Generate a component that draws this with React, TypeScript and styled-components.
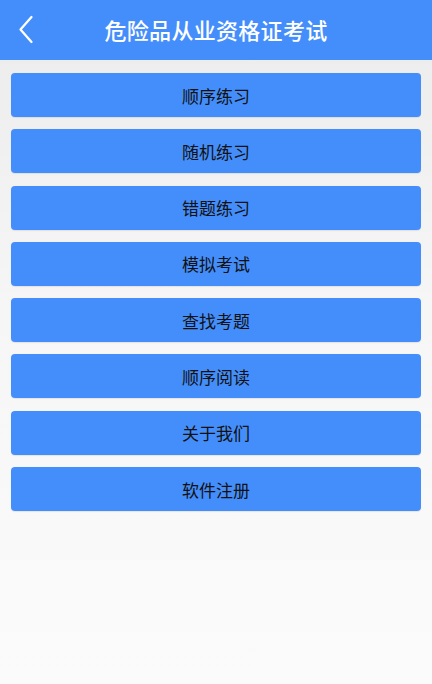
import React from "react";
import styled, { createGlobalStyle } from "styled-components";

const Global = createGlobalStyle`
  html, body { margin: 0; padding: 0; }
  body {
    font-family: "Noto Sans CJK SC", "Noto Sans", sans-serif;
    background: #fafafa;
  }
`;

const Page = styled.div`
  width: 432px;
  height: 684px;
  display: flex;
  flex-direction: column;
  background: linear-gradient(to bottom, #ebebeb 0%, #f6f6f6 45%, #fbfbfb 100%);
  overflow: hidden;
`;

const Header = styled.header`
  height: 60px;
  background: #448efc;
  display: flex;
  align-items: center;
  justify-content: center;
  position: relative;
  flex-shrink: 0;
`;

const BackButton = styled.button`
  position: absolute;
  left: 13px;
  top: 14px;
  width: 24px;
  height: 30px;
  padding: 0;
  border: none;
  background: transparent;
  display: flex;
  align-items: center;
  justify-content: center;
`;

const Title = styled.h1`
  margin: 0;
  color: #ffffff;
  font-size: 22px;
  font-weight: 500;
  letter-spacing: 0.3px;
  line-height: 1;
  margin-top: -3px;
`;

const Menu = styled.nav`
  display: flex;
  flex-direction: column;
  gap: 12.3px;
  padding: 13px 11px 0 11px;
`;

const MenuButton = styled.button`
  height: 44px;
  border: none;
  border-radius: 4px;
  background: #448efc;
  color: #111111;
  font-family: "Noto Sans CJK SC", "Noto Sans", sans-serif;
  font-size: 17px;
  font-weight: 400;
  line-height: 1;
  display: flex;
  align-items: center;
  justify-content: center;
  padding: 0;
  box-shadow: 0 0.5px 1px rgba(0, 0, 0, 0.08);
`;

const items = [
  "顺序练习",
  "随机练习",
  "错题练习",
  "模拟考试",
  "查找考题",
  "顺序阅读",
  "关于我们",
  "软件注册",
];

export default function App() {
  return (
    <Page>
      <Global />
      <Header>
        <BackButton aria-label="返回">
          <svg width="18" height="30" viewBox="0 0 18 30">
            <path
              d="M15.5 3 L4.5 15.5 L15.5 28"
              fill="none"
              stroke="#ffffff"
              strokeWidth="2.3"
              strokeLinecap="round"
              strokeLinejoin="round"
            />
          </svg>
        </BackButton>
        <Title>危险品从业资格证考试</Title>
      </Header>
      <Menu>
        {items.map((t) => (
          <MenuButton key={t}>{t}</MenuButton>
        ))}
      </Menu>
    </Page>
  );
}
